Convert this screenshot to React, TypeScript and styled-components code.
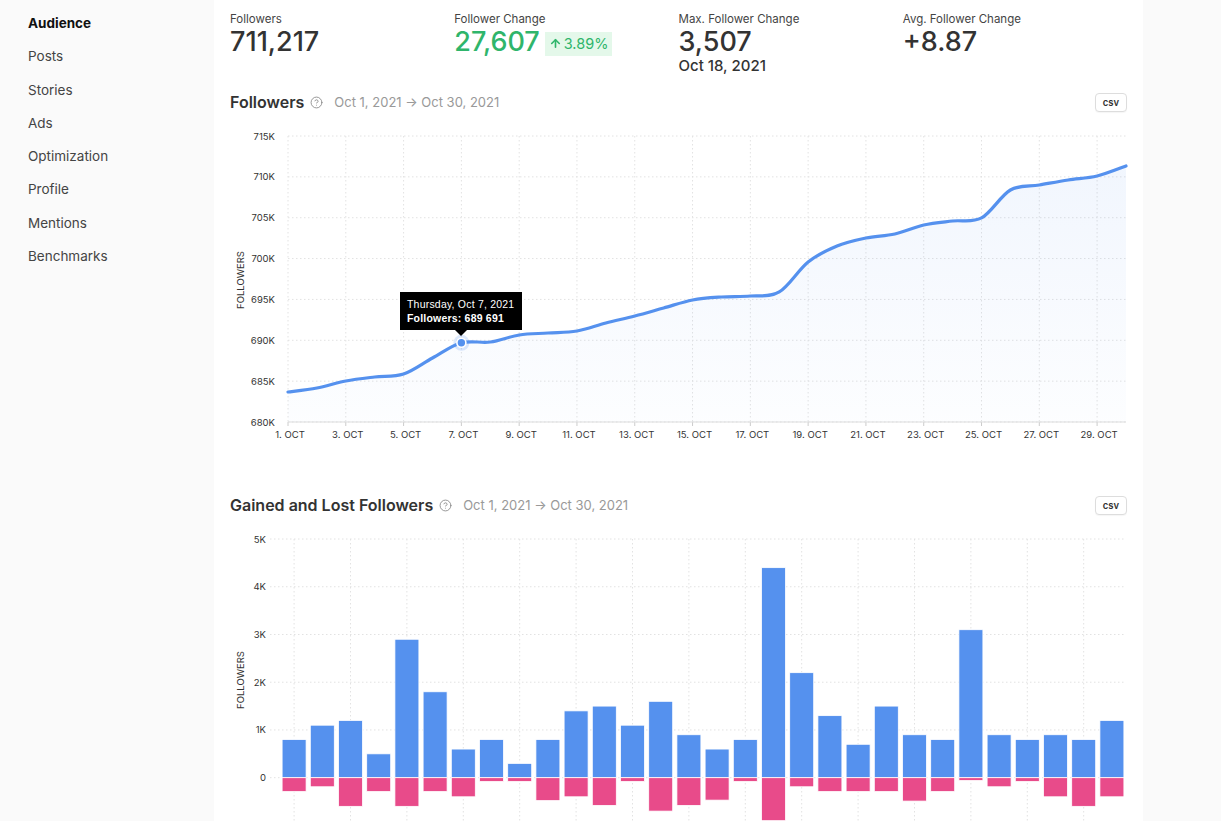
import React from 'react';
import styled, { createGlobalStyle } from 'styled-components';
import { CircleHelp, ArrowUp } from 'lucide-react';

const GlobalStyle = createGlobalStyle`
  html, body {
    margin: 0;
    padding: 0;
    background: #fafafa;
  }
  body {
    font-family: Inter, "Noto Sans", sans-serif;
    color: #222;
  }
`;

const Layout = styled.div`
  display: flex;
  align-items: flex-start;
`;

const Sidebar = styled.nav`
  width: 214px;
  flex-shrink: 0;
  box-sizing: border-box;
  padding: 7px 0 0 28px;
  display: flex;
  flex-direction: column;
`;

const NavItem = styled.a<{ $active?: boolean }>`
  font-size: 13.5px;
  line-height: 33.3px;
  color: ${p => (p.$active ? '#111' : '#444')};
  font-weight: ${p => (p.$active ? 700 : 400)};
  text-decoration: none;
  cursor: pointer;
`;

const Card = styled.main`
  width: 929px;
  flex-shrink: 0;
  box-sizing: border-box;
  background: #fff;
  padding: 11px 16px 0;
`;

const StatsRow = styled.section`
  display: grid;
  grid-template-columns: repeat(4, 1fr);
`;

const Stat = styled.div`
  display: flex;
  flex-direction: column;
`;

const StatLabel = styled.span`
  font-size: 11.5px;
  line-height: 16px;
  color: #444;
`;

const StatValueRow = styled.div`
  display: flex;
  align-items: center;
  gap: 5px;
`;

const StatValue = styled.span<{ $positive?: boolean }>`
  font-size: 27px;
  line-height: 30px;
  font-weight: 500;
  color: ${p => (p.$positive ? '#2fb56b' : '#333')};
`;

const ChangeBadge = styled.span`
  display: inline-flex;
  align-items: center;
  gap: 2px;
  background: #e4f8ea;
  color: #2fb56b;
  font-size: 14.5px;
  line-height: 24px;
  padding: 0 4px;
  margin-top: 3px;
`;

const StatSub = styled.span`
  font-size: 15px;
  line-height: 18px;
  font-weight: 500;
  color: #333;
`;

const SectionHeader = styled.header<{ $gap: number }>`
  display: flex;
  align-items: center;
  height: 28px;
  margin-top: ${p => p.$gap}px;
`;

const SectionTitle = styled.h2`
  margin: 0;
  font-size: 16px;
  font-weight: 600;
  color: #333;
`;

const Help = styled(CircleHelp)`
  margin-left: 6px;
  color: #888;
`;

const DateRange = styled.span`
  margin-left: 11px;
  font-size: 13px;
  color: #999;
`;

const CsvButton = styled.button`
  margin-left: auto;
  font-family: inherit;
  font-size: 9.5px;
  font-weight: 600;
  color: #333;
  background: #fff;
  border: 1px solid #ddd;
  border-radius: 4px;
  height: 19px;
  padding: 0 7px;
  box-shadow: 0 1px 1px rgba(0, 0, 0, 0.04);
`;

const ChartBox = styled.div<{ $gap: number }>`
  position: relative;
  margin-top: ${p => p.$gap}px;
`;

const ChartSvg = styled.svg`
  display: block;
  width: 897px;
  overflow: visible;
`;

const AxisText = styled.text`
  font-family: Inter, "Noto Sans", sans-serif;
  font-size: 9.5px;
  fill: #333;
`;

const Tooltip = styled.div`
  position: absolute;
  left: 170px;
  top: 167px;
  width: 122px;
  box-sizing: border-box;
  padding: 5px 7px;
  background: #000;
  color: #fff;
  font-family: "Liberation Sans", Arial, sans-serif;
  font-size: 10.5px;
  line-height: 14px;
  letter-spacing: 0.2px;
  &::after {
    content: '';
    position: absolute;
    left: 55px;
    bottom: -6px;
    border-left: 6px solid transparent;
    border-right: 6px solid transparent;
    border-top: 6px solid #000;
  }
  strong {
    font-weight: 700;
  }
`;

const BLUE = '#5591ee';
const PINK = '#e84b8a';
const GRID = '#e2e2e2';

// line chart values, thousands, Oct 1 .. Oct 30
const followers = [
  683.67, 684.16, 685.02, 685.51, 685.87, 687.83, 689.69, 689.79, 690.65, 690.89,
  691.14, 692.12, 692.97, 693.95, 694.93, 695.3, 695.42, 695.91, 699.58, 701.54,
  702.52, 703.01, 704.11, 704.6, 704.97, 708.39, 709.0, 709.62, 710.11, 711.33,
];

const gained = [
  0.8, 1.1, 1.2, 0.5, 2.9, 1.8, 0.6, 0.8, 0.3, 0.8, 1.4, 1.5, 1.1, 1.6, 0.9,
  0.6, 0.8, 4.4, 2.2, 1.3, 0.7, 1.5, 0.9, 0.8, 3.1, 0.9, 0.8, 0.9, 0.8, 1.2,
];

const lost = [
  0.29, 0.19, 0.6, 0.29, 0.6, 0.29, 0.4, 0.08, 0.08, 0.48, 0.4, 0.58, 0.08, 0.7, 0.58,
  0.47, 0.08, 0.9, 0.19, 0.29, 0.29, 0.29, 0.49, 0.29, 0.06, 0.19, 0.08, 0.4, 0.6, 0.4,
];

const days = Array.from({ length: 30 }, (_, i) => i + 1);

const smoothPath = (pts: [number, number][]) => {
  let d = `M${pts[0][0]},${pts[0][1]}`;
  for (let i = 0; i < pts.length - 1; i++) {
    const p0 = pts[i - 1] || pts[i];
    const p1 = pts[i];
    const p2 = pts[i + 1];
    const p3 = pts[i + 2] || p2;
    const c1x = p1[0] + (p2[0] - p0[0]) / 6;
    const c1y = p1[1] + (p2[1] - p0[1]) / 6;
    const c2x = p2[0] - (p3[0] - p1[0]) / 6;
    const c2y = p2[1] - (p3[1] - p1[1]) / 6;
    d += ` C${c1x},${c1y} ${c2x},${c2y} ${p2[0]},${p2[1]}`;
  }
  return d;
};

const FollowersChart: React.FC = () => {
  const left = 58;
  const right = 896;
  const top = 11;
  const bottom = 297;
  const step = (right - left) / 29;
  const yOf = (v: number) => bottom - ((v - 680) / 35) * (bottom - top);
  const pts = followers.map((v, i) => [left + i * step, yOf(v)] as [number, number]);
  const line = smoothPath(pts);
  const area = `${line} L${right},${bottom} L${left},${bottom} Z`;
  const ticks = [715, 710, 705, 700, 695, 690, 685, 680];

  return (
    <ChartBox $gap={9}>
      <ChartSvg height={320} viewBox="0 0 897 320">
        <defs>
          <linearGradient id="fillGrad" x1="0" y1="0" x2="0" y2="1">
            <stop offset="0%" stopColor={BLUE} stopOpacity={0.08} />
            <stop offset="100%" stopColor={BLUE} stopOpacity={0.015} />
          </linearGradient>
        </defs>
        {ticks.map(t => (
          <g key={t}>
            <line x1={left} x2={right} y1={yOf(t)} y2={yOf(t)} stroke={GRID} strokeDasharray="1.5 2.5" />
            <AxisText x={45} y={yOf(t) + 3.5} textAnchor="end">{t}K</AxisText>
          </g>
        ))}
        {days.filter(d => d % 2 === 1).map(d => {
          const x = left + (d - 1) * step;
          return (
            <g key={d}>
              <line x1={x} x2={x} y1={top} y2={bottom} stroke={GRID} strokeDasharray="1.5 2.5" />
              <line x1={x} x2={x} y1={bottom} y2={bottom + 4} stroke="#ccc" />
              <AxisText x={x + 2} y={313} textAnchor="middle">{d}. OCT</AxisText>
            </g>
          );
        })}
        <line x1={left} x2={right} y1={bottom} y2={bottom} stroke="#ddd" />
        <AxisText x={0} y={0} textAnchor="middle" transform="translate(14 155) rotate(-90)">
          FOLLOWERS
        </AxisText>
        <path d={area} fill="url(#fillGrad)" />
        <path d={line} fill="none" stroke={BLUE} strokeWidth={3.2} strokeLinecap="round" />
        <circle cx={pts[6][0]} cy={pts[6][1]} r={8} fill={BLUE} fillOpacity={0.2} />
        <circle cx={pts[6][0]} cy={pts[6][1]} r={4.5} fill={BLUE} stroke="#fff" strokeWidth={1.6} />
      </ChartSvg>
      <Tooltip>
        Thursday, Oct 7, 2021
        <br />
        <strong>Followers: 689 691</strong>
      </Tooltip>
    </ChartBox>
  );
};

const GainedLostChart: React.FC = () => {
  const left = 50;
  const right = 896;
  const zero = 252.7;
  const perK = 47.74;
  const cat = (right - left) / 30;
  const barW = 24;
  const ticks = [5, 4, 3, 2, 1, 0];

  return (
    <ChartBox $gap={6}>
      <ChartSvg height={300} viewBox="0 0 897 300">
        {ticks.map(t => (
          <g key={t}>
            <line x1={40} x2={right} y1={zero - t * perK} y2={zero - t * perK} stroke={GRID} strokeDasharray="1.5 2.5" />
            <AxisText x={36} y={zero - t * perK + 3.5} textAnchor="end">
              {t === 0 ? '0' : `${t}K`}
            </AxisText>
          </g>
        ))}
        {days.filter(d => d % 2 === 1).map(d => {
          const x = left + (d - 0.5) * cat;
          return (
            <line key={d} x1={x} x2={x} y1={zero - 5 * perK} y2={300} stroke={GRID} strokeDasharray="1.5 2.5" />
          );
        })}
        <AxisText x={0} y={0} textAnchor="middle" transform="translate(14 155) rotate(-90)">
          FOLLOWERS
        </AxisText>
        {days.map((d, i) => {
          const x = left + i * cat + (cat - barW) / 2;
          return (
            <g key={d}>
              <rect x={x} y={zero - gained[i] * perK} width={barW} height={gained[i] * perK} fill={BLUE} stroke="#fff" strokeWidth={0.8} />
              <rect x={x} y={zero} width={barW} height={lost[i] * perK} fill={PINK} stroke="#fff" strokeWidth={0.8} />
            </g>
          );
        })}
      </ChartSvg>
    </ChartBox>
  );
};

const navItems = ['Audience', 'Posts', 'Stories', 'Ads', 'Optimization', 'Profile', 'Mentions', 'Benchmarks'];

export default function App() {
  return (
    <>
      <GlobalStyle />
      <Layout>
        <Sidebar>
          {navItems.map((n, i) => (
            <NavItem key={n} $active={i === 0}>{n}</NavItem>
          ))}
        </Sidebar>
        <Card>
          <StatsRow>
            <Stat>
              <StatLabel>Followers</StatLabel>
              <StatValue>711,217</StatValue>
            </Stat>
            <Stat>
              <StatLabel>Follower Change</StatLabel>
              <StatValueRow>
                <StatValue $positive>27,607</StatValue>
                <ChangeBadge>
                  <ArrowUp size={13} strokeWidth={3} />
                  3.89%
                </ChangeBadge>
              </StatValueRow>
            </Stat>
            <Stat>
              <StatLabel>Max. Follower Change</StatLabel>
              <StatValue>3,507</StatValue>
              <StatSub>Oct 18, 2021</StatSub>
            </Stat>
            <Stat>
              <StatLabel>Avg. Follower Change</StatLabel>
              <StatValue>+8.87</StatValue>
            </Stat>
          </StatsRow>

          <SectionHeader $gap={13}>
            <SectionTitle>Followers</SectionTitle>
            <Help size={13} strokeWidth={1.6} />
            <DateRange>Oct 1, 2021 → Oct 30, 2021</DateRange>
            <CsvButton>csv</CsvButton>
          </SectionHeader>
          <FollowersChart />

          <SectionHeader $gap={46}>
            <SectionTitle>Gained and Lost Followers</SectionTitle>
            <Help size={13} strokeWidth={1.6} />
            <DateRange>Oct 1, 2021 → Oct 30, 2021</DateRange>
            <CsvButton>csv</CsvButton>
          </SectionHeader>
          <GainedLostChart />
        </Card>
      </Layout>
    </>
  );
}
